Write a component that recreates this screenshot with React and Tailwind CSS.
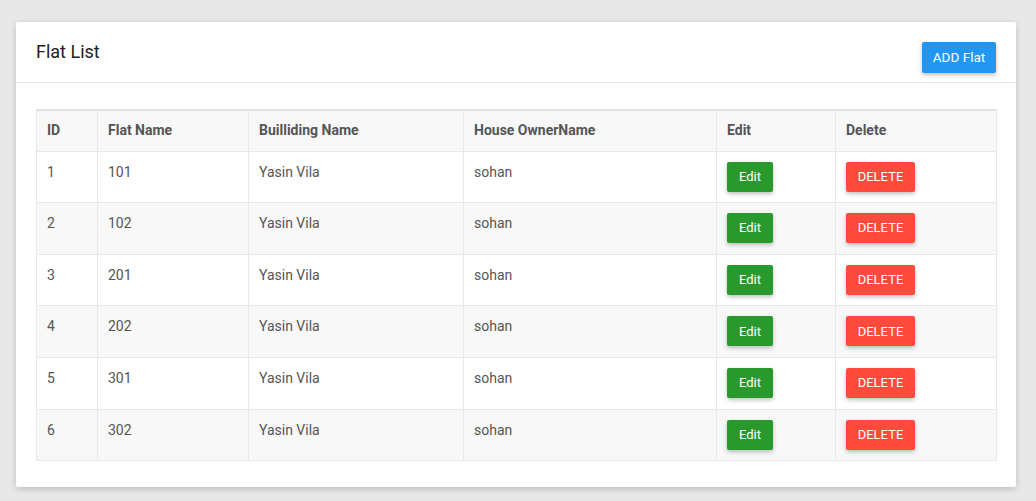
import React from "react";

const rows = [
  ["1", "101"],
  ["2", "102"],
  ["3", "201"],
  ["4", "202"],
  ["5", "301"],
  ["6", "302"],
];

export default function App() {
  return (
    <div
      className="min-h-[501px] w-full bg-[#e8e8e8] pt-[22px] px-4"
      style={{ fontFamily: "Roboto, 'Liberation Sans', sans-serif" }}
    >
      <div className="w-[1000px] h-[465px] bg-white rounded-[2px] shadow-[0_2px_6px_rgba(0,0,0,0.18)]">
        <div className="h-[61px] border-b border-[#e6e6e6] flex justify-between px-5">
          <div className="pt-[18px] text-[18px] leading-6 text-[#222]">Flat List</div>
          <div className="pt-5">
            <button className="w-[74px] h-[31px] bg-[#2196f3] text-white text-[13.5px] rounded-[2px] shadow-[0_2px_4px_rgba(0,0,0,0.25)] flex items-center justify-center">
              ADD Flat
            </button>
          </div>
        </div>
        <div className="px-5 pt-[26px]">
          <table className="w-[960px] table-fixed border-collapse border border-[#e2e2e2] border-t-2 text-[14px] text-[#555]">
            <colgroup>
              <col className="w-[61px]" />
              <col className="w-[151px]" />
              <col className="w-[215px]" />
              <col className="w-[253px]" />
              <col className="w-[119px]" />
              <col className="w-[161px]" />
            </colgroup>
            <thead>
              <tr className="h-[41px] bg-[#f8f8f8] text-left">
                {["ID", "Flat Name", "Builliding Name", "House OwnerName", "Edit", "Delete"].map((h) => (
                  <th key={h} className="border border-[#e8e8e8] px-[10px] font-bold text-[#555] align-middle">
                    {h}
                  </th>
                ))}
              </tr>
            </thead>
            <tbody>
              {rows.map(([id, name], i) => (
                <tr key={id} className={`h-[51.67px] ${i % 2 === 1 ? "bg-[#f8f8f8]" : "bg-white"}`}>
                  <td className="border border-[#e8e8e8] px-[10px] align-top pt-[10px] leading-5">{id}</td>
                  <td className="border border-[#e8e8e8] px-[10px] align-top pt-[10px] leading-5">{name}</td>
                  <td className="border border-[#e8e8e8] px-[10px] align-top pt-[10px] leading-5">Yasin Vila</td>
                  <td className="border border-[#e8e8e8] px-[10px] align-top pt-[10px] leading-5">sohan</td>
                  <td className="border border-[#e8e8e8] px-[10px] align-top pt-[10px]">
                    <button className="w-[46px] h-[30px] bg-[#2a992d] text-white text-[13px] rounded-[2px] shadow-[0_2px_4px_rgba(0,0,0,0.25)] flex items-center justify-center">
                      Edit
                    </button>
                  </td>
                  <td className="border border-[#e8e8e8] px-[10px] align-top pt-[10px]">
                    <button className="w-[69px] h-[30px] bg-[#ff4a3d] text-white text-[13px] rounded-[2px] shadow-[0_2px_4px_rgba(0,0,0,0.25)] flex items-center justify-center">
                      DELETE
                    </button>
                  </td>
                </tr>
              ))}
            </tbody>
          </table>
        </div>
      </div>
    </div>
  );
}
